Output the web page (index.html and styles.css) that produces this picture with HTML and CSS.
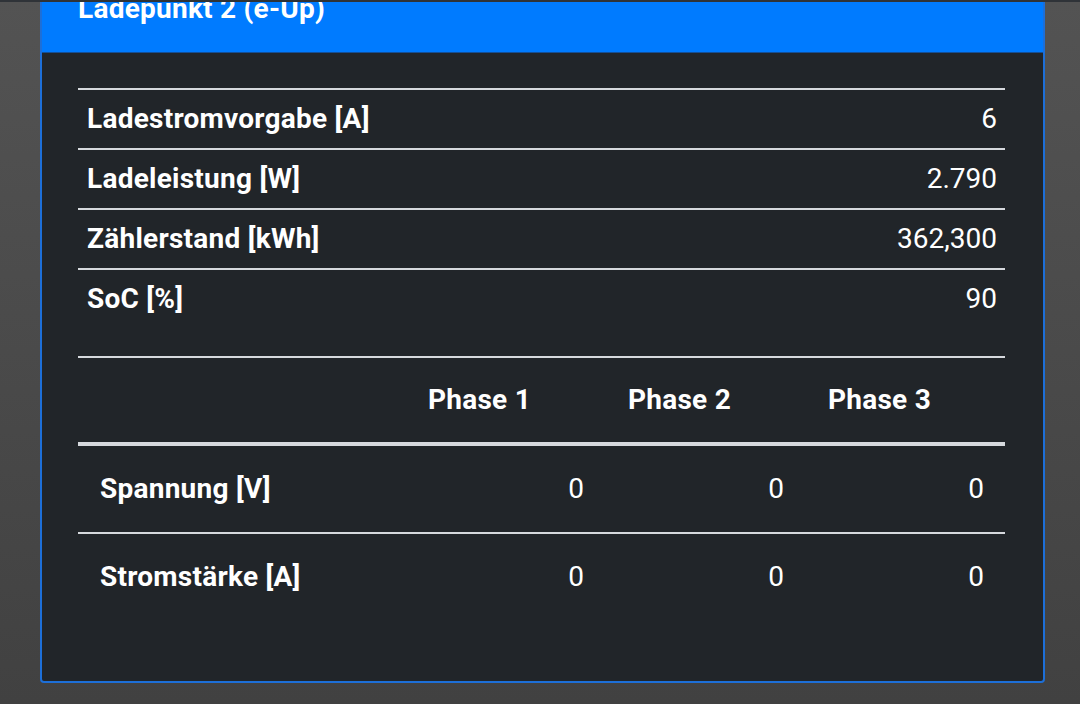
FILE: index.html
```html
<!DOCTYPE html>
<html lang="de">
<head>
    <meta charset="UTF-8">
    <meta name="viewport" content="width=device-width, initial-scale=1.0">
    <title>Ladepunkt 2</title>
    <link rel="stylesheet" href="styles.css">
</head>
<body>
    <div class="topbar"></div>

    <div class="card">
        <div class="card-header">Ladepunkt 2 (e-Up)</div>

        <div class="card-body">
            <table class="info-table">
                <tbody>
                    <tr>
                        <th>Ladestromvorgabe [A]</th>
                        <td>6</td>
                    </tr>
                    <tr>
                        <th>Ladeleistung [W]</th>
                        <td>2.790</td>
                    </tr>
                    <tr>
                        <th>Zählerstand [kWh]</th>
                        <td>362,300</td>
                    </tr>
                    <tr>
                        <th>SoC [%]</th>
                        <td>90</td>
                    </tr>
                </tbody>
            </table>

            <table class="phase-table">
                <colgroup>
                    <col class="col-label">
                    <col class="col-phase">
                    <col class="col-phase">
                    <col class="col-phase">
                </colgroup>
                <thead>
                    <tr>
                        <th></th>
                        <th>Phase 1</th>
                        <th>Phase 2</th>
                        <th>Phase 3</th>
                    </tr>
                </thead>
                <tbody>
                    <tr>
                        <th>Spannung [V]</th>
                        <td>0</td>
                        <td>0</td>
                        <td>0</td>
                    </tr>
                    <tr>
                        <th>Stromstärke [A]</th>
                        <td>0</td>
                        <td>0</td>
                        <td>0</td>
                    </tr>
                </tbody>
            </table>
        </div>
    </div>
</body>
</html>
```

FILE: styles.css
```css
body {
    margin: 0;
    padding: 0 35px 20px 40px;
    font-family: Roboto, "Noto Sans", sans-serif;
    color: #fff;
    background: linear-gradient(#535353, #414141);
    min-height: 100vh;
    box-sizing: border-box;
    overflow: hidden;
}

.topbar {
    position: fixed;
    top: 0;
    left: 0;
    right: 0;
    height: 2px;
    background-color: #2f3338;
    z-index: 2;
}

.card {
    margin-top: -36px;
    border: 2px solid #1d6fd8;
    border-radius: 4px;
    background-color: #212529;
    overflow: hidden;
}

.card-header {
    background-color: #007bff;
    border-bottom: 1px solid #154f96;
    padding: 22px 36px;
    font-size: 28px;
    line-height: 42px;
    font-weight: 700;
    letter-spacing: 0.25px;
}

.card-body {
    padding: 35px 38px 61px 36px;
}

table {
    width: 100%;
    border-collapse: collapse;
    font-size: 28px;
    line-height: 42px;
}

th {
    font-weight: 700;
    text-align: left;
    letter-spacing: 0.25px;
}

.info-table th,
.info-table td {
    border-top: 2px solid #d6d9dd;
    padding: 8px 8px 8px 9px;
}

.info-table td {
    text-align: right;
}

.phase-table {
    margin-top: 28px;
    table-layout: fixed;
}

.col-phase {
    width: 200px;
}

.phase-table thead th {
    border-top: 2px solid #d6d9dd;
    border-bottom: 4px solid #d6d9dd;
    padding: 21px 23px;
}

.phase-table tbody th,
.phase-table tbody td {
    padding: 22px 21px 22px 22px;
}

.phase-table tbody tr + tr th,
.phase-table tbody tr + tr td {
    border-top: 2px solid #d6d9dd;
}

.phase-table td {
    text-align: right;
}
```
